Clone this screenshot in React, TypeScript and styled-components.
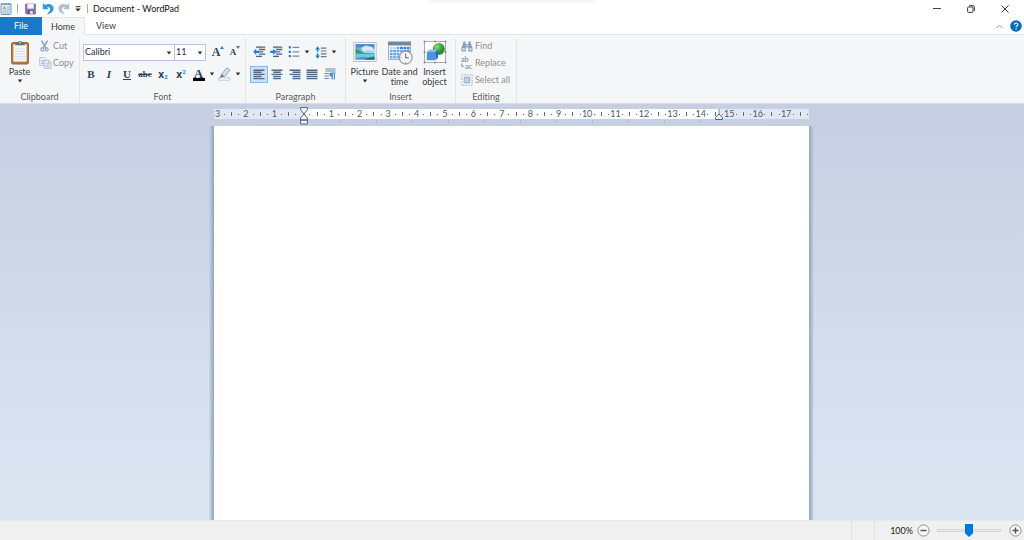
import React from "react";
import styled, { createGlobalStyle, css } from "styled-components";

const Global = createGlobalStyle`
  * { box-sizing: border-box; }
  html, body, #root { height: 100%; }
  body { margin: 0; overflow: hidden; font-variant-ligatures: none; }
  body, button, select, input { font-family: Lato, "Open Sans", sans-serif; font-size: 9px; line-height: 10px; }
  button { font-variant-ligatures: none; }
  svg { display: block; flex: none; }
`;

const Window = styled.div`
  display: flex;
  flex-direction: column;
  min-height: 100vh;
  background: #fff;
  color: #3b3b3b;
`;

const PopupShadow = styled.div`
  position: absolute;
  top: -6px;
  left: 50%;
  width: 168px;
  height: 6px;
  transform: translateX(-50%);
  border-radius: 4px;
  box-shadow: 0 0 4px #00000020;
`;

const TitleBar = styled.header`
  display: flex;
  align-items: center;
  height: 17px;
`;

const QuickAccess = styled.div`
  display: flex;
  align-items: center;
  gap: 4px;
`;

const bare = css`
  display: flex;
  align-items: center;
  justify-content: center;
  padding: 0;
  border: 0;
  background: none;
  color: inherit;
`;

const QuickButton = styled.button<{ $w?: number }>`
  ${bare}
  width: ${(p) => p.$w ?? 12}px;
  height: 16px;
`;

const BarDivider = styled.span`
  width: 1px;
  height: 9px;
  margin: 0 5px;
  background: #a9a9a9;
`;

const Title = styled.h1`
  flex: 1;
  margin: 0;
  font-size: 9px;
  line-height: 16px;
  font-weight: 400;
  color: #111;
`;

const WindowButton = styled.button`
  ${bare}
  width: 34px;
  height: 16px;
`;

const WindowButtons = styled.div`
  display: flex;
  padding-right: 2px;
`;

const TabBar = styled.nav`
  display: flex;
  height: 18px;
  box-shadow: inset 0 -1px #e4e5e7;
`;

const Tab = styled.button<{ $kind?: "file" | "active" }>`
  ${bare}
  width: 42px;
  ${(p) => p.$kind === "file" && css`background: #1979ca; color: #fff;`}
  ${(p) => p.$kind === "active" && css`
    width: 43px;
    background: #f5f6f7;
    border: 1px solid #e4e5e7;
    border-bottom: 0;
    border-left: 0;
  `}
`;

const TabTools = styled.div`
  display: flex;
  align-items: center;
  gap: 7px;
  margin-left: auto;
  padding-right: 2px;
`;

const IconButton = styled.button`
  ${bare}
`;

const Ribbon = styled.div`
  display: flex;
  height: 69px;
  padding-top: 3px;
  background: #f5f6f7;
  border-bottom: 1px solid #d9dde4;
`;

const Group = styled.section<{ $w: number }>`
  display: flex;
  flex-direction: column;
  width: ${(p) => p.$w}px;
  height: 65px;
  border-right: 1px solid #e4e6e9;
`;

const GroupBody = styled.div<{ $pad?: number }>`
  display: flex;
  flex: 1;
  padding-left: ${(p) => p.$pad ?? 0}px;
`;

const GroupName = styled.h2`
  margin: 0;
  height: 12px;
  font-size: 9px;
  line-height: 11px;
  font-weight: 400;
  text-align: center;
  color: #5c5c5c;
`;

const BigButton = styled.button<{ $w?: number }>`
  display: flex;
  flex-direction: column;
  align-items: center;
  width: ${(p) => p.$w ?? 35}px;
  padding: 2px 0 0;
  border: 0;
  background: none;
  color: #3b3b3b;
  white-space: nowrap;
`;

const BigIcon = styled.span`
  height: 27px;
`;

const Arrow = styled.svg.attrs({ viewBox: "0 0 6 4", width: 6, height: 4, "aria-hidden": true, children: <path d="M.8.6h4.4L3 3.4z" fill="#2b2b2b" /> })``;

const ArrowSlot = styled.span`
  padding-top: 2px;
`;

const SideList = styled.div`
  display: flex;
  flex-direction: column;
`;

const SideButton = styled.button<{ $gap?: number }>`
  display: flex;
  align-items: center;
  gap: ${(p) => p.$gap ?? 2}px;
  height: 17px;
  padding: 0 0 1px;
  border: 0;
  background: none;
  color: #8f8f8f;
`;

const CutSlot = styled.span`
  padding-left: 1px;
`;

const Rows = styled.div`
  display: flex;
  flex-direction: column;
  padding-top: 5px;
  gap: 4px;
`;

const ToolRow = styled.div`
  display: flex;
  align-items: center;
  height: 18px;
`;

const Combo = styled.span<{ $w: number }>`
  position: relative;
  width: ${(p) => p.$w}px;
  height: 17px;
  margin-right: -1px;
  & > svg { position: absolute; right: 3px; top: 7px; pointer-events: none; }
`;

const Select = styled.select`
  width: 100%;
  height: 17px;
  padding: 0 1px;
  appearance: none;
  border: 1px solid #b8c6dd;
  border-radius: 0;
  background: #fff;
  color: #2b2b4b;
`;

const ComboPair = styled.div`
  display: flex;
  margin: 0 4px 0 1px;
`;

const Tool = styled.button<{ $w?: number; $on?: boolean }>`
  ${bare}
  gap: 4px;
  width: ${(p) => p.$w ?? 18}px;
  height: 17px;
  border: 1px solid ${(p) => (p.$on ? "#8ab8ec" : "transparent")};
  background: ${(p) => (p.$on ? "#cbe1f8" : "none")};
`;

const Glyph = styled.span<{ $size?: number; $italic?: boolean; $line?: string; $sans?: boolean }>`
  font-family: ${(p) => (p.$sans ? `"Open Sans", sans-serif` : `"Liberation Serif", serif`)};
  font-size: ${(p) => p.$size ?? 11}px;
  line-height: 12px;
  font-weight: 700;
  font-style: ${(p) => (p.$italic ? "italic" : "normal")};
  text-decoration: ${(p) => p.$line ?? "none"};
  color: #2b3f5c;
`;

const Mark = styled.span<{ $low?: boolean }>`
  align-self: ${(p) => (p.$low ? "flex-end" : "flex-start")};
  font-size: 6px;
  line-height: 6px;
  font-weight: 700;
  color: #2a83d8;
`;

const Script = styled.span`
  display: flex;
  align-items: center;
  height: 11px;
`;

const UpDown = styled.svg`
  align-self: flex-start;
`;

const FontColor = styled.span`
  display: block;
  height: 13px;
  width: 12px;
  line-height: 9px;
  text-align: center;
  border-bottom: 3px solid #000;
`;

const Workspace = styled.main`
  flex: 1;
  display: flex;
  flex-direction: column;
  align-items: center;
  padding: 5px 1px 0 0;
  background: linear-gradient(#c5cfe1, #dce6f3);
`;

const Ruler = styled.div`
  position: relative;
  width: 595px;
  height: 10px;
  background: linear-gradient(90deg, #e3e7f0 90px, #fff 90px, #fff 505px, #e3e7f0 505px);
`;

const Scale = styled.div`
  display: grid;
  grid-template-columns: repeat(21, 1fr);
  height: 10px;
  margin-right: -2px;
`;

const Centimetre = styled.div`
  display: grid;
  grid-template-columns: repeat(4, 1fr);
  justify-items: center;
  align-items: center;
`;

const RulerNumber = styled.span`
  display: flex;
  justify-content: center;
  width: 7px;
  white-space: nowrap;
  color: #48597a;
`;

const RulerMark = styled.i<{ $h: number }>`
  width: 1px;
  height: ${(p) => p.$h}px;
  background: #5b6c8b;
`;

const Indent = styled.span<{ $x: number; $y: number }>`
  position: absolute;
  left: ${(p) => p.$x}px;
  top: ${(p) => p.$y}px;
`;

const TabStops = styled.div`
  display: flex;
  gap: 35px;
  width: 595px;
  height: 7px;
  padding: 2px 0 0 126px;
  & > i { width: 1px; height: 1px; background: #8593ad; }
`;

const Sheet = styled.div`
  flex: 1;
  display: flex;
`;

const SheetEdge = styled.span<{ $side: "left" | "right" }>`
  width: 5px;
  background: linear-gradient(to ${(p) => p.$side}, #93a4c2, #a9b7d0c0 60%, #c5cfe100);
`;

const Page = styled.article`
  width: 595px;
  background: #fff;
  outline: none;
`;

const StatusBar = styled.footer`
  display: flex;
  align-items: center;
  justify-content: flex-end;
  height: 20px;
  padding-right: 2px;
  background: #f0f0f0;
  border-top: 1px solid #e6e8eb;
`;

const StatusCell = styled.span`
  width: 24px;
  height: 19px;
  border: solid #e0e0e0;
  border-width: 0 1px;
`;

const ZoomLabel = styled.label`
  margin: 0 4px 0 15px;
  color: #222;
`;

const ZoomSlider = styled.input`
  appearance: none;
  width: 64px;
  height: 14px;
  margin: 0 8px 0 7px;
  background: none;
  &::-webkit-slider-runnable-track {
    height: 3px;
    background: #e7eaea;
    border: 1px solid #d6d6d6;
  }
  &::-webkit-slider-thumb {
    appearance: none;
    width: 8px;
    height: 13px;
    margin-top: -6px;
    background: #0078d7;
    clip-path: polygon(0 0, 100% 0, 100% 72%, 50% 100%, 0 72%);
  }
`;

const ReplaceBox = styled.span`
  display: flex;
  flex-direction: column;
  width: 12px;
  height: 14px;
  font-size: 7px;
  line-height: 7px;
  font-weight: 700;
  text-align: left;
  color: #8796ad;
  & > span { display: flex; }
`;

const GlyphPair = styled.span`
  display: flex;
  height: 13px;
  align-items: center;
`;

const AppIcon = () => (
  <svg width="12" height="13" viewBox="0 0 12 13">
    <rect x="1" y="1.5" width="10" height="11" rx="1" fill="#e3f0fa" stroke="#6c9cc8" />
    <path d="M1 2.2h10" stroke="#5a92c5" strokeWidth="1.6" />
    <path d="M2.8 1v2M5 1v2M7.2 1v2M9.4 1v2" stroke="#bcd8ee" strokeWidth=".7" />
    <path d="m3 7.5 1.3-3.3L5.6 7.5M3.5 6.4h1.7" stroke="#dd8230" strokeWidth=".9" fill="none" />
    <path d="M7 5h3M7 7h3M2.5 9h7.3M2.5 11h7.3" stroke="#79a9d2" strokeWidth=".8" />
  </svg>
);
const SaveIcon = () => (
  <svg width="11" height="12" viewBox="0 0 11 12">
    <path d="M.5 1h10v10h-9l-1-1z" fill="#8b78b6" stroke="#7d6ca8" strokeWidth=".8" />
    <path d="M2.4 1h6.3v4.6H2.4z" fill="#f7f5fa" />
    <path d="M2.6 7.4h6v3.4h-6z" fill="#5c4b85" />
    <path d="M4.8 8h3.1v2.8H4.8z" fill="#e5e2ee" />
  </svg>
);
const TurnArrow = ({ color, flip }: { color: string; flip?: boolean }) => (
  <svg width="12" height="13" viewBox="0 0 12 13">
    <g transform={flip ? "matrix(-1 0 0 1 12 0)" : undefined} fill={color}>
      <path d="M.8.8v6.4h6L5.1 5.5c1.8-.6 3.2.2 3 2-.1 1.5-1.3 2.8-3.2 4.7 4.2-.4 6.7-2.8 6.7-6C11.6 2.4 7 .6 2.8 3z" />
    </g>
  </svg>
);
const PasteIcon = () => (
  <svg width="20" height="26" viewBox="0 0 20 26">
    <rect x="1.5" y="2.5" width="17" height="21.5" rx="1.5" fill="#b77935" stroke="#9c6932" />
    <path d="M3.5 4.5h13v17h-13z" fill="#f4f7fa" stroke="#d5dbe2" strokeWidth=".5" />
    <path d="M5 9h10M5 11.5h10M5 14h10M5 16.5h10M5 19h10" stroke="#ccd6e1" strokeWidth=".7" />
    <path d="M5.2 5.3V3.5h2.4C7.6.2 12.4.2 12.4 3.5h2.4v1.8z" fill="#646970" />
    <circle cx="10" cy="2.7" r=".9" fill="#dadde0" />
  </svg>
);
const CutIcon = () => (
  <svg width="9" height="12" viewBox="0 0 9 12" fill="none" stroke="#8fa0b8">
    <path d="m1.5.7 4.3 7.2M7.5.7 3.2 7.9" strokeWidth="1.5" />
    <circle cx="2.3" cy="9.4" r="1.5" strokeWidth="1.1" />
    <circle cx="6.7" cy="9.4" r="1.5" strokeWidth="1.1" />
  </svg>
);
const CopyIcon = () => (
  <svg width="13" height="12" viewBox="0 0 13 12" fill="#eef4fa" stroke="#a9bcd5" strokeWidth=".9">
    <path d="M.7.7h4.6l1.8 1.8v6H.7z" />
    <path d="M2 3.5h3M2 5h3M2 6.5h3" />
    <path d="M5.2 3.3h4.7l2 2v6.1H5.2z" />
    <path d="M6.7 6.4h3.6M6.7 8h3.8M6.7 9.6h3.8M9.7 3.4v2h2" />
  </svg>
);
const PenIcon = () => (
  <svg width="13" height="14" viewBox="0 0 13 14">
    <path d="M.8 10.8h10.8v2.4H.8z" fill="#fff" stroke="#a9bbd3" strokeWidth=".8" />
    <path d="m3.5 7.4 5.4-6.5 2.9 2.2-5.2 6.4z" fill="#d6e3f1" stroke="#7f95b2" strokeWidth=".9" />
    <path d="m3.3 7.2 2.9 2.2L1.8 11z" fill="#62768f" />
  </svg>
);
const DentIcon = ({ right }: { right?: boolean }) => (
  <svg width="13" height="12" viewBox="0 0 13 12">
    <path d="M3 1.2h9.3M6.5 3.5h5.8M6.5 5.8h3.8M6.5 8.1h5.8M3 10.4h6" stroke="#4c6482" strokeWidth="1.3" />
    <path d={right ? "M6.3 5.8 3.3 2.6v2.1H.3v2.2h3V9z" : "M.2 5.8 3.2 2.6v2.1h3v2.2h-3V9z"} fill="#207fdc" />
    <path d="M6.3.3v11" stroke="#3f5877" strokeWidth=".7" strokeDasharray="1 1" />
  </svg>
);
const BulletsIcon = () => (
  <svg width="12" height="12" viewBox="0 0 12 12">
    <path d="M.7 1.4h2.2M.7 5.8h2.2M.7 10.2h2.2" stroke="#207fdc" strokeWidth="2.2" />
    <path d="M4.5 1.4h6.8M4.5 5.8h6.8M4.5 10.2h6.8" stroke="#7b8da7" strokeWidth="1.2" />
  </svg>
);
const SpacingIcon = () => (
  <svg width="12" height="13" viewBox="0 0 12 13">
    <path d="M2.6.3 5 3.4H3.4v6.2H5l-2.4 3.1L.2 9.6h1.6V3.4H.2z" fill="#207fdc" />
    <path d="M1 6.5h3.3" stroke="#f5f6f7" strokeWidth="1.6" />
    <path d="M5.8 2.2h5.7M5.8 5h5.7M5.8 7.8h5.7M5.8 10.6h5.7" stroke="#66798f" strokeWidth="1.2" />
  </svg>
);
const LINES: Record<string, string> = {
  left: "M.5 1.2h11M.5 3.3h8M.5 5.4h11M.5 7.5h8M.5 9.6h11",
  center: "M.5 1.2h11M2.2 3.3h7.6M.5 5.4h11M2.2 7.5h7.6M2.2 9.6h7.6",
  right: "M.5 1.2h11M3.5 3.3h8M.5 5.4h11M3.5 7.5h8M3.5 9.6h8",
  justify: "M.5 1.2h11M.5 3.3h11M.5 5.4h11M.5 7.5h11M.5 9.6h11",
};
const AlignIcon = ({ kind }: { kind: string }) => (
  <svg width="12" height="11" viewBox="0 0 12 11">
    <path d={LINES[kind]} stroke="#536985" strokeWidth="1.4" />
  </svg>
);
const ParagraphIcon = () => (
  <svg width="12" height="12" viewBox="0 0 12 12">
    <path d="M1.5 1h10M1.5 3h10M.5 5.5h4.3M.5 8h4.3M.5 10.5h4.3" stroke="#71839c" strokeWidth="1.2" />
    <path d="M7.6 11.5v-3C4.6 8.3 4.6 4.4 7.6 4.4h4v1.2h-.7v5.9H9.8V5.6h-.9v5.9z" fill="#3a8fe4" />
  </svg>
);
const PictureIcon = () => (
  <svg width="24" height="24" viewBox="0 0 24 24">
    <defs>
      <linearGradient id="sky" x2="0" y2="1">
        <stop stopColor="#2b79c6" /><stop offset=".6" stopColor="#b7e5f5" /><stop offset="1" stopColor="#e8f8f5" />
      </linearGradient>
    </defs>
    <path d="M.8 2.5h22.4v19H.8z" fill="#f9f9f9" stroke="#b7babd" strokeWidth=".9" />
    <path d="M2.5 4.2h19v15.5h-19z" fill="url(#sky)" />
    <path d="M2.5 9c3 .2 5.5 2.8 9.5 4H2.5z" fill="#3f9271" />
    <path d="M2.5 13h19v6.7h-19z" fill="#399dcd" />
    <path d="M2.5 14.5c6-1 11 .3 19-1v2.8c-7 1.6-12 .1-19 1.6z" fill="#6fcbe0" />
    <path d="M11 19.7c3-1.8 7-2 10.5-3v3z" fill="#26764f" />
    <path d="m8 8 5-2.5L19 7l2.5 4-7-.5-4 .8z" fill="#ebf7fd" opacity=".85" />
  </svg>
);
const DateIcon = () => (
  <svg width="26" height="25" viewBox="0 0 26 25">
    <path d="M1.5 2.5h22v17h-22z" fill="#fff" stroke="#8c9fb7" strokeWidth=".8" />
    <path d="M1.1 1.5h22.8v4H1.1z" fill="#74869c" />
    {[0, 1, 2, 3].map((r) => [0, 1, 2, 3, 4, 5].map((c) => (
      <path key={`${r}${c}`} d={`M${2.8 + c * 3.4} ${6.8 + r * 3.1}h2.8v2.4h-2.8z`} fill={r === 0 && c < 2 ? "#b9d5f0" : c > r + 2 ? "#3c80d2" : "#6aa6e6"} />
    )))}
    <circle cx="18.7" cy="17.6" r="6.4" fill="#f5f7f8" stroke="#9aa1a9" strokeWidth="1.3" />
    <path d="M18.7 13.6v4.2h3.2" stroke="#49535f" fill="none" strokeWidth=".9" />
    <path d="M18.7 22v1M13.5 17.6h1" stroke="#777" strokeWidth=".7" />
  </svg>
);
const ObjectIcon = () => (
  <svg width="24" height="24" viewBox="0 0 24 24">
    <defs>
      <radialGradient id="ball" cx=".35" cy=".3"><stop stopColor="#8de06f" /><stop offset="1" stopColor="#259331" /></radialGradient>
    </defs>
    <path d="M1.5 1.5h21v21h-21z" fill="#fff" stroke="#8a8a8a" strokeWidth=".7" />
    <circle cx="15.8" cy="9" r="6" fill="url(#ball)" />
    <path d="m3.8 12 2.7-2.4H15L12.5 12z" fill="#87baf1" />
    <path d="M3.8 12h8.7v8.3H3.8z" fill="#4f92e5" />
    <path d="M12.5 12 15 9.6v8.2l-2.5 2.5z" fill="#266dc1" />
    {[1.5, 12, 22.5].map((x) => [1.5, 12, 22.5].map((y) => (
      x === 12 && y === 12 ? null : <rect key={`${x}-${y}`} x={x - 0.8} y={y - 0.8} width="1.6" height="1.6" fill="#7a7a7a" />
    )))}
  </svg>
);
const FindIcon = () => (
  <svg width="12" height="11" viewBox="0 0 12 11" fill="#8a9ebb">
    <path d="M2.2.5h2.3V3h3V.5h2.3v2l1.7 4.2v3.8H7.3V6.4H4.7v4.1H.5V6.7l1.7-4.2z" />
    <path d="M1.5 7h2.2v2.3H1.5zM8.3 7h2.2v2.3H8.3z" fill="#d3deeb" />
    <path d="M5 4h2v1H5z" fill="#edf2f7" />
  </svg>
);
const SelectAllIcon = () => (
  <svg width="12" height="12" viewBox="0 0 12 12">
    <path d="M.8.8h10.4v10.4H.8z" fill="none" stroke="#8ea4c2" strokeDasharray="1.3 1.3" />
    <path d="M3.2 3.2h5.6v5.6H3.2z" fill="#bed0e8" stroke="#95acca" />
  </svg>
);
const RoundSign = ({ plus }: { plus?: boolean }) => (
  <svg width="13" height="13" viewBox="0 0 13 13">
    <circle cx="6.5" cy="6.5" r="5.6" fill="#f8f8f8" stroke="#858585" strokeWidth=".9" />
    <path d={plus ? "M3.5 6.5h6M6.5 3.5v6" : "M3.5 6.5h6"} stroke="#555" strokeWidth="1.5" />
  </svg>
);
const SizedA = ({ size, down }: { size: number; down?: boolean }) => (
  <GlyphPair>
    <Glyph $size={size}>A</Glyph>
    <UpDown width="4" height="3" viewBox="0 0 4 3"><path d={down ? "M0 0h4L2 3z" : "M0 3h4L2 0z"} fill="#207fdc" /></UpDown>
  </GlyphPair>
);

const numbers = Array.from({ length: 21 }, (_, i) => i - 3);

export default function App() {
  return (
    <Window>
      <Global />
      <PopupShadow />
      <TitleBar>
        <AppIcon />
        <BarDivider />
        <QuickAccess>
          <QuickButton $w={15} aria-label="Save"><SaveIcon /></QuickButton>
          <QuickButton aria-label="Undo"><TurnArrow color="#2d9be3" /></QuickButton>
          <QuickButton aria-label="Redo"><TurnArrow color="#afc0d3" flip /></QuickButton>
          <QuickButton $w={8} aria-label="Customize Quick Access Toolbar">
            <svg width="6" height="6" viewBox="0 0 6 6"><path d="M.5.7h5" stroke="#333" /><path d="M.3 2.5h5.4L3 5.5z" fill="#333" /></svg>
          </QuickButton>
        </QuickAccess>
        <BarDivider />
        <Title>Document - WordPad</Title>
        <WindowButtons>
          <WindowButton aria-label="Minimize"><svg width="8" height="8" viewBox="0 0 8 8"><path d="M0 3.5h8" stroke="#444" /></svg></WindowButton>
          <WindowButton aria-label="Restore">
            <svg width="8" height="8" viewBox="0 0 8 8" fill="none" stroke="#222" strokeWidth=".9"><rect x=".6" y="2" width="5.4" height="5.4" rx="1" /><path d="M2.2.6h3.6q1.6 0 1.6 1.6v3.6" /></svg>
          </WindowButton>
          <WindowButton aria-label="Close"><svg width="8" height="8" viewBox="0 0 8 8"><path d="m.5.5 7 7m0-7-7 7" stroke="#222" strokeWidth=".9" /></svg></WindowButton>
        </WindowButtons>
      </TitleBar>
      <TabBar>
        <Tab $kind="file">File</Tab>
        <Tab $kind="active">Home</Tab>
        <Tab>View</Tab>
        <TabTools>
          <IconButton aria-label="Minimize the Ribbon"><svg width="7" height="5" viewBox="0 0 7 5"><path d="m.7 4 2.8-2.8L6.3 4" fill="none" stroke="#999" /></svg></IconButton>
          <IconButton aria-label="Help">
            <svg width="12" height="12" viewBox="0 0 12 12"><circle cx="6" cy="6" r="5.8" fill="#0869c4" /><path d="M4.3 4.7c0-2.3 3.6-2.2 3.5-.1C7.8 6 6.1 5.9 6.1 7.3M6.1 8.3v1.3" fill="none" stroke="#fff" strokeWidth="1.2" /></svg>
          </IconButton>
        </TabTools>
      </TabBar>

      <Ribbon>
        <Group $w={80}>
          <GroupBody>
            <BigButton $w={39}>
              <BigIcon><PasteIcon /></BigIcon>Paste<ArrowSlot><Arrow /></ArrowSlot>
            </BigButton>
            <SideList>
              <SideButton disabled $gap={4}><CutSlot><CutIcon /></CutSlot>Cut</SideButton>
              <SideButton disabled $gap={1}><CopyIcon />Copy</SideButton>
            </SideList>
          </GroupBody>
          <GroupName>Clipboard</GroupName>
        </Group>

        <Group $w={166}>
          <GroupBody $pad={2}>
            <Rows>
              <ToolRow>
                <ComboPair>
                  <Combo $w={92}><Select aria-label="Font family"><option>Calibri</option></Select><Arrow /></Combo>
                  <Combo $w={32}><Select aria-label="Font size"><option>11</option></Select><Arrow /></Combo>
                </ComboPair>
                <Tool aria-label="Grow font"><SizedA size={12} /></Tool>
                <Tool $w={16} aria-label="Shrink font"><SizedA size={9} down /></Tool>
              </ToolRow>
              <ToolRow>
                <Tool aria-label="Bold"><Glyph>B</Glyph></Tool>
                <Tool aria-label="Italic"><Glyph $italic>I</Glyph></Tool>
                <Tool aria-label="Underline"><Glyph $line="underline">U</Glyph></Tool>
                <Tool aria-label="Strikethrough"><Glyph $size={9} $line="line-through">abc</Glyph></Tool>
                <Tool aria-label="Subscript"><Script><Glyph $sans $size={10}>x</Glyph><Mark $low>2</Mark></Script></Tool>
                <Tool aria-label="Superscript"><Script><Glyph $sans $size={10}>x</Glyph><Mark>2</Mark></Script></Tool>
                <Tool $w={27} aria-label="Text color"><FontColor><Glyph $size={13}>A</Glyph></FontColor><Arrow /></Tool>
                <Tool $w={24} aria-label="Text highlight color"><PenIcon /><Arrow /></Tool>
              </ToolRow>
            </Rows>
          </GroupBody>
          <GroupName>Font</GroupName>
        </Group>

        <Group $w={100}>
          <GroupBody $pad={4}>
            <Rows>
              <ToolRow>
                <Tool aria-label="Decrease indent"><DentIcon /></Tool>
                <Tool $w={17} aria-label="Increase indent"><DentIcon right /></Tool>
                <Tool $w={28} aria-label="Start a list"><BulletsIcon /><Arrow /></Tool>
                <Tool $w={26} aria-label="Line spacing"><SpacingIcon /><Arrow /></Tool>
              </ToolRow>
              <ToolRow>
                <Tool $on aria-label="Align left"><AlignIcon kind="left" /></Tool>
                <Tool aria-label="Center"><AlignIcon kind="center" /></Tool>
                <Tool $w={17} aria-label="Align right"><AlignIcon kind="right" /></Tool>
                <Tool aria-label="Justify"><AlignIcon kind="justify" /></Tool>
                <Tool aria-label="Paragraph"><ParagraphIcon /></Tool>
              </ToolRow>
            </Rows>
          </GroupBody>
          <GroupName>Paragraph</GroupName>
        </Group>

        <Group $w={110}>
          <GroupBody $pad={1}>
            <BigButton><BigIcon><PictureIcon /></BigIcon>Picture<ArrowSlot><Arrow /></ArrowSlot></BigButton>
            <BigButton><BigIcon><DateIcon /></BigIcon><span>Date and<br />time</span></BigButton>
            <BigButton><BigIcon><ObjectIcon /></BigIcon><span>Insert<br />object</span></BigButton>
          </GroupBody>
          <GroupName>Insert</GroupName>
        </Group>

        <Group $w={61}>
          <GroupBody $pad={5}>
            <SideList>
              <SideButton disabled><FindIcon />Find</SideButton>
              <SideButton disabled>
                <ReplaceBox aria-hidden="true"><span>ab</span><span><svg width="4" height="5" viewBox="0 0 4 5"><path d="M.7.5v2.7h2.5" fill="none" stroke="#8796ad" /></svg>ac</span></ReplaceBox>Replace
              </SideButton>
              <SideButton disabled><SelectAllIcon />Select all</SideButton>
            </SideList>
          </GroupBody>
          <GroupName>Editing</GroupName>
        </Group>
      </Ribbon>

      <Workspace>
        <Ruler>
          <Scale>
            {numbers.map((n) => (
              <Centimetre key={n}>
                <RulerNumber>{n === 0 ? "" : Math.abs(n)}</RulerNumber>
                <RulerMark $h={1} /><RulerMark $h={4} /><RulerMark $h={1} />
              </Centimetre>
            ))}
          </Scale>
          <Indent $x={86} $y={-2}>
            <svg width="8" height="18" viewBox="0 0 8 18" fill="#f3f5f9" stroke="#53647f" strokeWidth="1">
              <path d="M.6.6h6.8v2L4 7 .6 2.6zM4 7l3.4 4v2H.6v-2zM.6 13h6.8v4H.6z" />
            </svg>
          </Indent>
          <Indent $x={501} $y={0}>
            <svg width="8" height="12" viewBox="0 0 8 12" fill="#f3f5f9" stroke="#53647f">
              <path d="M4 0v5" strokeWidth=".7" /><path d="m4 5 3.4 3.5v2H.6v-2z" />
            </svg>
          </Indent>
        </Ruler>
        <TabStops>{Array.from({ length: 11 }, (_, i) => <i key={i} />)}</TabStops>
        <Sheet>
          <SheetEdge $side="left" />
          <Page role="textbox" aria-label="Document" contentEditable suppressContentEditableWarning />
          <SheetEdge $side="right" />
        </Sheet>
      </Workspace>

      <StatusBar>
        <StatusCell />
        <ZoomLabel htmlFor="zoom">100%</ZoomLabel>
        <IconButton aria-label="Zoom out"><RoundSign /></IconButton>
        <ZoomSlider id="zoom" type="range" min={0} max={100} defaultValue={50} />
        <IconButton aria-label="Zoom in"><RoundSign plus /></IconButton>
      </StatusBar>
    </Window>
  );
}
